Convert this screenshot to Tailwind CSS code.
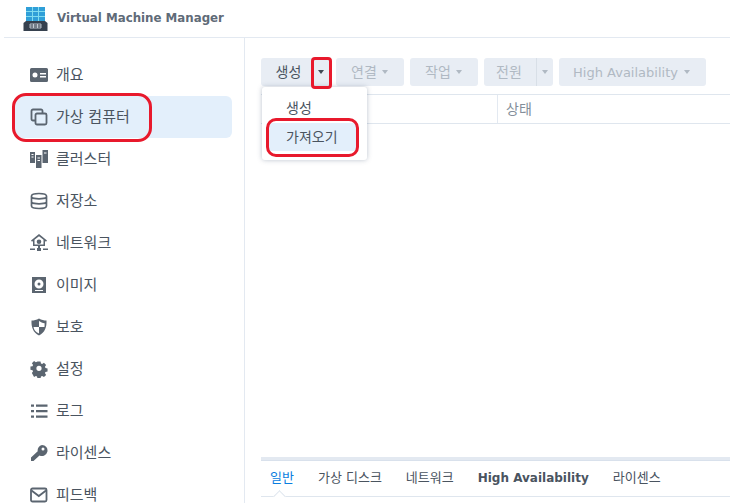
<!DOCTYPE html>
<html lang="ko">
<head>
    <meta charset="UTF-8">
    <title>Virtual Machine Manager</title>
    <script src="https://cdn.jsdelivr.net/npm/@tailwindcss/browser@4"></script>
</head>
<body class="bg-white">
<div class="relative w-[730px] h-[503px] overflow-hidden bg-white text-[14px] text-[#4a545f] font-['DejaVu_Sans','Noto_Sans_CJK_KR',sans-serif]">
    <!-- Title bar -->
    <div class="flex items-center h-[38px] ml-[4px] pl-[19px] border-b border-[#e3e9f1]">
        <svg class="w-[25px] h-[24px]" viewBox="0 0 25 24">
            <rect x="3" y="0" width="19" height="14" fill="#2f9fd8"/>
            <path d="M3 4.500h19M3 9.500h19M9.500 0v14M15.500 0v14" stroke="#7fdcf0" stroke-width="1"/>
            <path d="M3 14h19l2.500 2v8H.5v-8z" fill="#36414f"/>
            <path d="M7 17h11v4H7zM10.500 17v4M14.500 17v4M7 19h11" stroke="#d5dce4" stroke-width="0.800" fill="none"/>
        </svg>
        <span class="ml-[9px] text-[11.800px] font-bold text-[#5f6b78]">Virtual Machine Manager</span>
    </div>

    <div class="flex h-[465px]">
        <!-- Sidebar -->
        <div class="w-[245px] h-full shrink-0 border-r border-[#e3e9f1] pt-[16px] pl-[14px] text-[15px]">
            <div class="flex items-center h-[42px] pl-[16px] w-[218px]">
                <svg class="w-[18px] h-[16px] shrink-0" viewBox="0 0 18 16" fill="#5b6570"><path fill-rule="evenodd" d="M1.500 1h15A1.500 1.500 0 0 1 18 2.500v11a1.500 1.500 0 0 1-1.500 1.500h-15A1.500 1.500 0 0 1 0 13.500v-11A1.500 1.500 0 0 1 1.500 1zM5 5.500a2.500 2.500 0 1 0 0 5 2.500 2.500 0 0 0 0-5zM10 6v1.500h6V6zM10 9v1.500h6V9z"/></svg>
                <span class="ml-[8px]">개요</span>
            </div>
            <div class="flex items-center h-[42px] pl-[16px] w-[218px] rounded-[6px] bg-[#e3effb]">
                <svg class="w-[18px] h-[18px] shrink-0" viewBox="0 0 18 18" fill="none" stroke="#5b6570" stroke-width="1.800"><path d="M5 12.500H3A1.500 1.500 0 0 1 1.500 11V3A1.500 1.500 0 0 1 3 1.500h8A1.500 1.500 0 0 1 12.500 3v2"/><rect x="5.500" y="5.500" width="11" height="11" rx="1.500"/></svg>
                <span class="ml-[8px]">가상 컴퓨터</span>
            </div>
            <div class="flex items-center h-[42px] pl-[16px] w-[218px]">
                <svg class="w-[18px] h-[18px] shrink-0" viewBox="0 0 18 18" fill="#5b6570"><path d="M0 2h5v11H0zM6 5h5.500v13H6zM12.500 0H18v13h-5.500z"/><path d="M1.500 4.500h2M1.500 7h2M7.500 8h2.500M7.500 10.500h2.500M14 3h2.500" stroke="#fff"/></svg>
                <span class="ml-[8px]">클러스터</span>
            </div>
            <div class="flex items-center h-[42px] pl-[16px] w-[218px]">
                <svg class="w-[18px] h-[18px] shrink-0" viewBox="0 0 18 18" fill="none" stroke="#5b6570" stroke-width="1.700"><path d="M1.500 4c0-1.500 2-2.500 7.500-2.500S16.500 2.500 16.500 4v10c0 1.500-2 2.500-7.500 2.500S1.500 15.500 1.500 14z"/><path d="M1.500 5.500c1.500 1 4 1.300 7.500 1.300s6-.3 7.500-1.300M1.500 10.500c1.500 1 4 1.300 7.500 1.300s6-.3 7.500-1.300"/></svg>
                <span class="ml-[8px]">저장소</span>
            </div>
            <div class="flex items-center h-[42px] pl-[16px] w-[218px]">
                <svg class="w-[18px] h-[18px] shrink-0" viewBox="0 0 18 18" fill="#5b6570"><path fill-rule="evenodd" d="M9 0l8 6.500-1 1.200-1-.8V12H3V6.900l-1 .8-1-1.200zM9 2.200L4.500 5.800V10.500h9V5.800zM9 5.500a2.300 2.300 0 1 1 0 4.600 2.300 2.300 0 0 1 0-4.600z"/><path d="M8 12h2v2h-2zM0 14.500h5v1.500H0zM7 14h4v3H7zM13 14.500h5v1.500h-5z"/></svg>
                <span class="ml-[8px]">네트워크</span>
            </div>
            <div class="flex items-center h-[42px] pl-[16px] w-[218px]">
                <svg class="w-[18px] h-[18px] shrink-0" viewBox="0 0 18 18" fill="#5b6570"><path fill-rule="evenodd" d="M2 1h14v16H2zM9 3.500a4.500 4.500 0 1 0 0 9 4.500 4.500 0 0 0 0-9zM5 14v1h8v-1z"/><circle cx="9" cy="8" r="1.500"/></svg>
                <span class="ml-[8px]">이미지</span>
            </div>
            <div class="flex items-center h-[42px] pl-[16px] w-[218px]">
                <svg class="w-[18px] h-[18px] shrink-0" viewBox="0 0 18 18" fill="#5b6570"><path fill-rule="evenodd" d="M9 .500c2.500 1.500 5 2 7.500 2 .3 6.500-1.500 12-7.500 15-6-3-7.800-8.500-7.500-15 2.500 0 5-.5 7.500-2zM9 3v6H3.500c.4 2.800 2 5.300 5.500 6.500V9h5.500c.1-1.200.1-2.300.1-3.700C12.500 5 10.800 4.200 9 3z"/></svg>
                <span class="ml-[8px]">보호</span>
            </div>
            <div class="flex items-center h-[42px] pl-[16px] w-[218px]">
                <svg class="w-[18px] h-[18px] shrink-0" viewBox="0 0 18 18" fill="#5b6570"><path fill-rule="evenodd" d="M7.300 1h3.400l.5 2.300 1.300.6 2-1.300 2.400 2.400-1.300 2 .6 1.300 2.300.5v3.400l-2.300.5-.6 1.300 1.300 2-2.400 2.400-2-1.300-1.300.6-.5 2.300H7.300l-.5-2.300-1.300-.6-2 1.300L1.100 14l1.300-2-.6-1.300L-.5 10.200V6.800l2.300-.5.6-1.300-1.300-2L3.500 .6l2 1.300 1.300-.6zM9 5.800a2.900 2.900 0 1 0 0 5.800 2.900 2.900 0 0 0 0-5.800z" transform="translate(.9 .5) scale(.9)"/></svg>
                <span class="ml-[8px]">설정</span>
            </div>
            <div class="flex items-center h-[42px] pl-[16px] w-[218px]">
                <svg class="w-[18px] h-[18px] shrink-0" viewBox="0 0 18 18" fill="#5b6570"><path d="M1 2.500h3v2.300H1zM6 2.500h11.500v2.300H6zM1 8h3v2.300H1zM6 8h11.500v2.300H6zM1 13.500h3v2.300H1zM6 13.500h11.500v2.300H6z"/></svg>
                <span class="ml-[8px]">로그</span>
            </div>
            <div class="flex items-center h-[42px] pl-[16px] w-[218px]">
                <svg class="w-[18px] h-[18px] shrink-0" viewBox="0 0 18 18" fill="#5b6570"><path fill-rule="evenodd" d="M12 1a5.500 5.500 0 1 1-2.500 10.400L3.500 17H1v-3.500l6.700-6.300A5.500 5.500 0 0 1 12 1zM13 3.500a1.500 1.500 0 1 0 0 3 1.500 1.500 0 0 0 0-3z"/></svg>
                <span class="ml-[8px]">라이센스</span>
            </div>
            <div class="flex items-center h-[42px] pl-[16px] w-[218px]">
                <svg class="w-[18px] h-[18px] shrink-0" viewBox="0 0 18 18" fill="none" stroke="#5b6570" stroke-width="1.800"><rect x="1" y="2.500" width="15.500" height="13" rx="1.500"/><path d="M1.500 4.500l7.300 5.500 7.200-5.500"/></svg>
                <span class="ml-[8px]">피드백</span>
            </div>
        </div>

        <!-- Main -->
        <div class="flex-1 min-w-0 pl-[16px] flex flex-col">
            <div class="flex items-center gap-[6px] mt-[20px] h-[28px]">
                <div class="flex h-full w-[69px] rounded-[3px] bg-[#e8edf4]">
                    <span class="w-[50px] pl-[5px] flex items-center justify-center">생성</span>
                    <span class="w-[19px] flex items-center justify-center"><span class="w-0 h-0 border-x-[3.500px] border-x-transparent border-t-[4px] border-t-[#414b55]"></span></span>
                </div>
                <div class="flex h-full w-[68px] rounded-[3px] bg-[#e8edf4] items-center justify-center gap-[5px] text-[#b0b9c3]"><span class="-ml-[1px]">연결</span><span class="w-0 h-0 border-x-[3.500px] border-x-transparent border-t-[4px] border-t-[#b0b9c3]"></span></div>
                <div class="flex h-full w-[68px] rounded-[3px] bg-[#e8edf4] items-center justify-center gap-[5px] text-[#b0b9c3]"><span class="-ml-[1px]">작업</span><span class="w-0 h-0 border-x-[3.500px] border-x-transparent border-t-[4px] border-t-[#b0b9c3]"></span></div>
                <div class="flex h-full w-[69px] rounded-[3px] bg-[#e8edf4] text-[#b0b9c3]">
                    <span class="w-[53px] pr-[2px] flex items-center justify-center border-r border-[#d8dfe7]">전원</span>
                    <span class="flex-1 flex items-center justify-center"><span class="w-0 h-0 border-x-[3.500px] border-x-transparent border-t-[4px] border-t-[#b0b9c3]"></span></span>
                </div>
                <div class="flex h-full w-[147px] rounded-[3px] bg-[#e8edf4] items-center justify-center gap-[6px] text-[13px] text-[#b0b9c3]"><span class="-ml-[2px] pt-[1px]">High Availability</span><span class="w-0 h-0 border-x-[3.500px] border-x-transparent border-t-[4px] border-t-[#b0b9c3]"></span></div>
            </div>
            <!-- Table header -->
            <div class="flex items-center h-[30px] mt-[8px] border-y border-[#dfe6ee]">
                <div class="w-[237px] h-full border-r border-[#e3e9f1]"></div>
                <span class="ml-[8px] text-[#838e9a]">상태</span>
            </div>
            <div class="flex-1"></div>
            <!-- Detail tabs -->
            <div class="h-[4px] bg-[#e3e9f1] border-b border-[#d9e1ec]"></div>
            <div class="relative flex items-center h-[36px] border-b border-[#dfe6ee] mb-[6px] pb-[2px] pl-[9px] text-[13px]">
                <span class="text-[#0a7ee0]">일반</span>
                <span class="ml-[24px]">가상 디스크</span>
                <span class="ml-[24px]">네트워크</span>
                <span class="ml-[24px] font-bold text-[12px]">High Availability</span>
                <span class="ml-[24px]">라이센스</span>
                <span class="absolute left-[14px] bottom-[-5px] w-[9px] h-[9px] rotate-45 bg-white border-l border-t border-[#dfe6ee]"></span>
            </div>
        </div>
    </div>

    <!-- Dropdown menu -->
    <div class="absolute left-[262px] top-[87px] w-[105px] h-[73px] rounded-[3px] bg-white shadow-[0_0_5px_rgba(60,80,110,0.35)] pt-[7px] pl-[7px]">
        <div class="h-[29px] pl-[17px] flex items-center">생성</div>
        <div class="h-[28px] w-[87px] pl-[17px] flex items-center bg-[#e3effb]">가져오기</div>
    </div>

    <!-- Red callouts -->
    <div class="absolute left-[12px] top-[93px] w-[140px] h-[49px] rounded-[14px] border-[3px] border-[#e8192c]"></div>
    <div class="absolute left-[311px] top-[57px] w-[21px] h-[32px] rounded-[4px] border-[3px] border-[#e8192c]"></div>
    <div class="absolute left-[266px] top-[118px] w-[93px] h-[39px] rounded-[10px] border-[3px] border-[#e8192c]"></div>
</div>
</body>
</html>
